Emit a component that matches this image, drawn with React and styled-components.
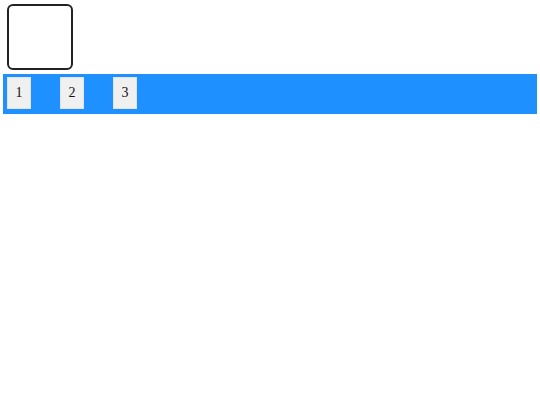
import React from 'react';
import styled, { createGlobalStyle } from 'styled-components';

const Global = createGlobalStyle`
  body {
    margin: 0;
    background: #fff;
    font-family: "Liberation Serif", "Times New Roman", serif;
  }
`;

const Page = styled.div`
  padding: 4px 3px;
`;

const Square = styled.div`
  width: 62px;
  height: 62px;
  margin-left: 4px;
  border: 2px solid #222;
  border-radius: 6px;
  background: #fff;
`;

const Bar = styled.div`
  margin-top: 4px;
  height: 40px;
  box-sizing: border-box;
  padding: 3px 4px;
  display: flex;
  align-items: flex-start;
  gap: 29px;
  background: #1e90ff;
`;

const Item = styled.button`
  width: 24px;
  height: 32px;
  padding: 0;
  border: 1px solid #e4e4e4;
  background: #f0f0f0;
  font-family: "Liberation Serif", "Times New Roman", serif;
  font-size: 14px;
  color: #111;
`;

export default function App() {
  return (
    <Page>
      <Global />
      <Square />
      <Bar>
        {[1, 2, 3].map(n => (
          <Item key={n}>{n}</Item>
        ))}
      </Bar>
    </Page>
  );
}
